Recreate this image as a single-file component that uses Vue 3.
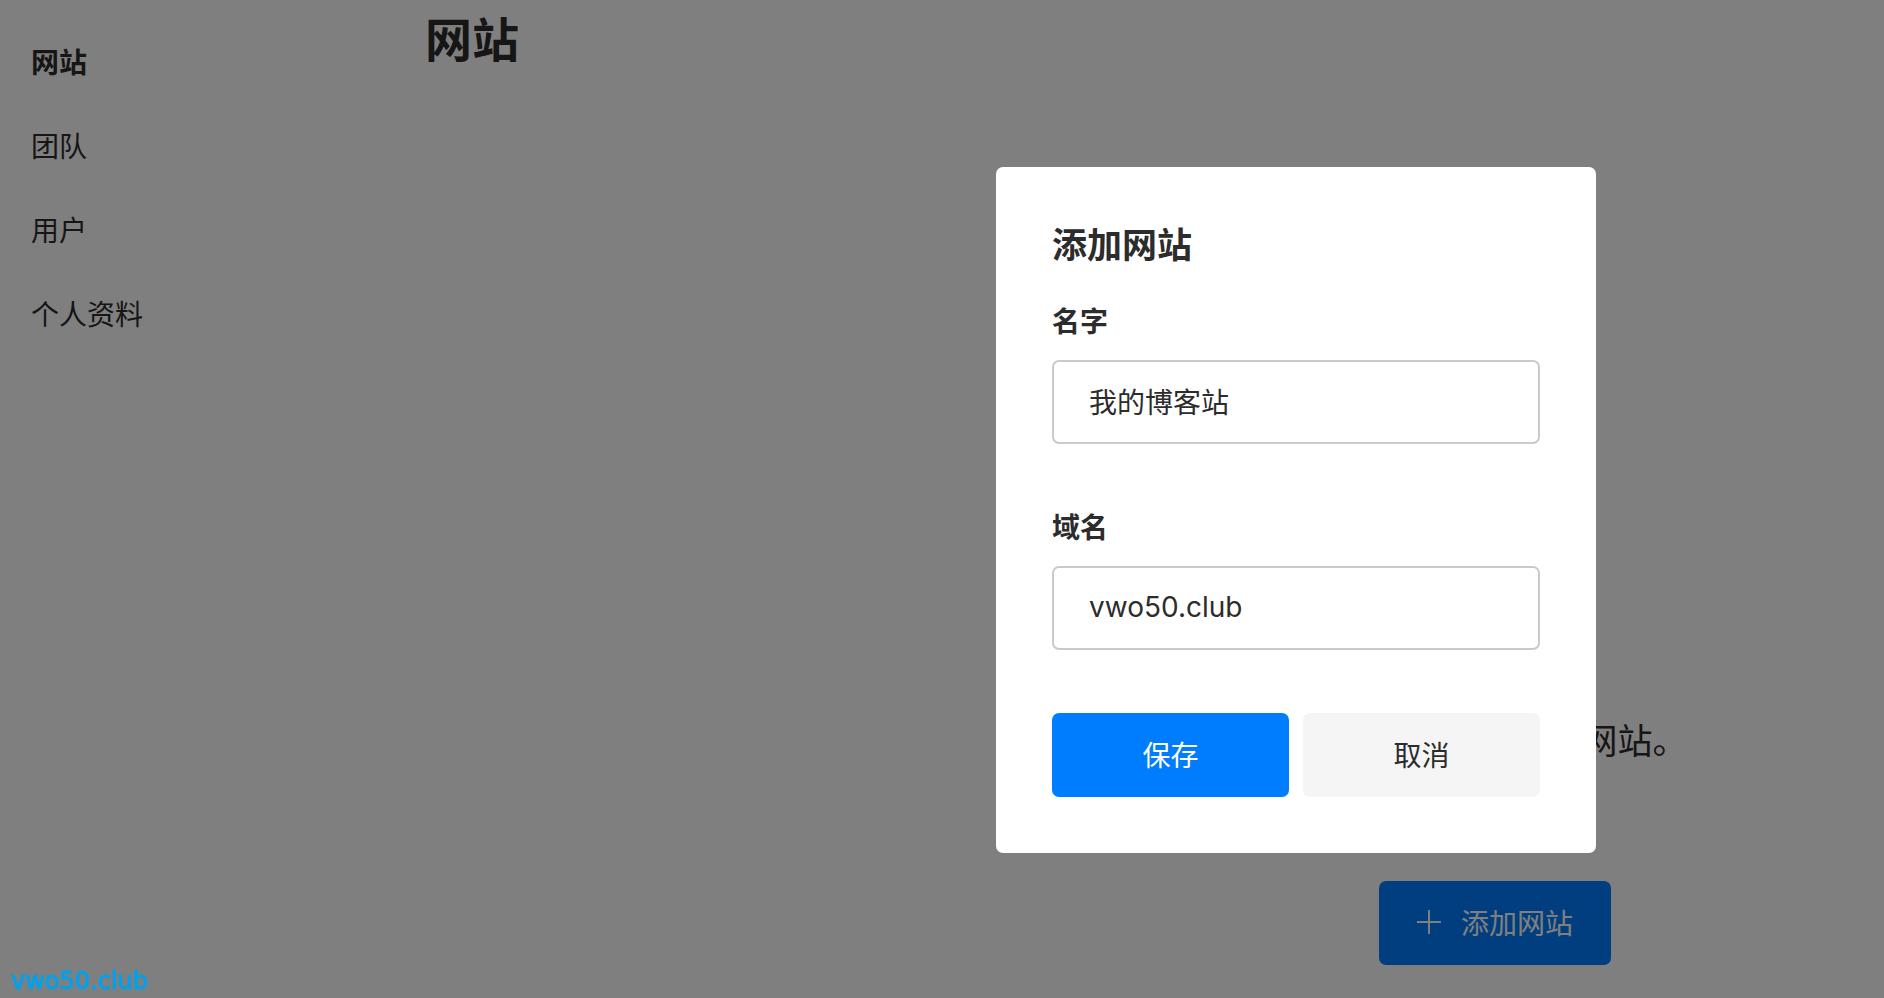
<script setup>
import { ref } from 'vue'

const links = ['网站', '团队', '用户', '个人资料']
const active = ref('网站')
const name = ref('我的博客站')
const domain = ref('vwo50.club')
</script>

<template>
  <div class="page">
    <nav class="sidebar">
      <a
        v-for="link in links"
        :key="link"
        href="#"
        class="link"
        :class="{ active: link === active }"
        @click.prevent="active = link"
      >{{ link }}</a>
    </nav>
    <main class="main">
      <h1 class="heading">网站</h1>
      <section class="empty">
        <p class="message">您还没有设置任何网站。</p>
        <button type="button" class="button primary add">
          <svg class="plus" viewBox="0 0 24 24" aria-hidden="true">
            <path d="M12 0V24M0 12H24" />
          </svg>
          <span>添加网站</span>
        </button>
      </section>
    </main>
    <div class="overlay">
      <form class="modal" role="dialog" aria-labelledby="dialog-title" @submit.prevent>
        <h2 id="dialog-title" class="title">添加网站</h2>
        <div class="field">
          <label for="site-name">名字</label>
          <input id="site-name" v-model="name" type="text" />
        </div>
        <div class="field">
          <label for="site-domain">域名</label>
          <input id="site-domain" v-model="domain" type="text" />
        </div>
        <div class="actions">
          <button type="submit" class="button primary">保存</button>
          <button type="button" class="button">取消</button>
        </div>
      </form>
    </div>
    <div class="watermark">vwo50.club</div>
  </div>
</template>

<style>
body {
  overflow: hidden;
}
</style>

<style scoped>
.page {
  display: flex;
  min-height: 100vh;
  background: #fff;
  color: #2c2c2c;
  font-family: Inter, "Noto Sans CJK SC", sans-serif;
  font-size: 28px;
}

.sidebar {
  display: flex;
  flex: 0 0 394px;
  flex-direction: column;
  gap: 42px;
  padding: 42px 0 0 31px;
}

.link {
  color: inherit;
  line-height: 42px;
  text-decoration: none;
}

.active {
  font-weight: 700;
}

.main {
  display: flex;
  flex: 1;
  flex-direction: column;
}

.heading {
  margin: 0;
  padding-top: 5px;
  font-size: 47px;
  line-height: 70px;
}

.empty {
  display: flex;
  flex-direction: column;
  align-items: center;
  gap: 112px;
  margin-top: 638px;
  padding-left: 681px;
}

.message {
  margin: 0;
  font-size: 35px;
  line-height: 56px;
  white-space: nowrap;
}

.button {
  display: flex;
  align-items: center;
  justify-content: center;
  height: 84px;
  padding: 0 38px 2px;
  border: 0;
  border-radius: 7px;
  background: #f5f5f5;
  color: inherit;
  font: inherit;
  white-space: nowrap;
}

.primary {
  background: #007dff;
  color: #fff;
}

.add {
  gap: 20px;
}

.plus {
  width: 24px;
  height: 24px;
  fill: none;
  stroke: currentColor;
  stroke-width: 2;
}

.overlay {
  position: fixed;
  inset: 0;
  display: flex;
  align-items: center;
  justify-content: center;
  padding: 22px 0 0 708px;
  background: rgba(0, 0, 0, 0.5);
}

.modal {
  box-sizing: border-box;
  width: 600px;
  padding: 56px;
  border-radius: 7px;
  background: #fff;
}

.title {
  margin: 0 0 34px;
  font-size: 35px;
  line-height: 44px;
}

.field {
  display: flex;
  flex-direction: column;
  gap: 17px;
  margin-bottom: 63px;
}

.field label {
  font-weight: 700;
  line-height: 42px;
}

.field input {
  box-sizing: border-box;
  width: 100%;
  height: 84px;
  padding: 0 35px 2px;
  border: 2px solid #cacaca;
  border-radius: 7px;
  outline: 0;
  background: #fff;
  color: inherit;
  font: inherit;
}

.actions {
  display: grid;
  grid-template-columns: 1fr 1fr;
  gap: 14px;
}

.watermark {
  position: fixed;
  bottom: 3px;
  left: 11px;
  color: #00a2ec;
  font-family: "DejaVu Sans", sans-serif;
  font-size: 24px;
  line-height: 28px;
  -webkit-text-stroke: 1px #00a2ec;
}
</style>
